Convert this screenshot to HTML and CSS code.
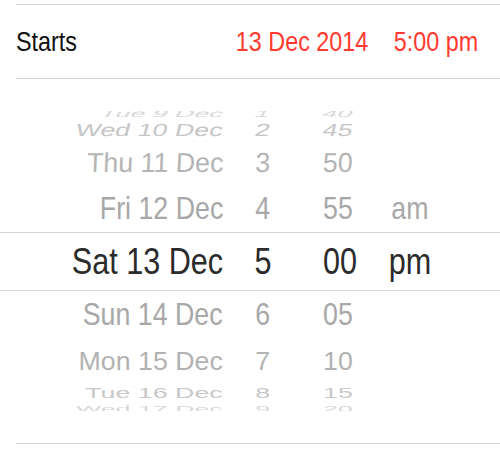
FILE: index.html
```html
<!DOCTYPE html>
<html>
<head>
<meta charset="utf-8">
<link rel="stylesheet" href="styles.css">
</head>
<body>
<div class="screen">
  <div class="rule"></div>
  <div class="field">
    <span class="sx label">Starts</span>
    <span class="sx value"><span>13 Dec 2014</span><span>5:00 pm</span></span>
  </div>
  <div class="rule"></div>
  <div class="picker">
    <div class="wheel">
      <div class="row r-up4"><div class="c-date"><span class="sx">Tue 9 Dec</span></div><div class="c-hour"><span class="sx">1</span></div><div class="c-min"><span class="sx">40</span></div><div class="c-ampm"></div></div>
      <div class="row r-up3"><div class="c-date"><span class="sx">Wed 10 Dec</span></div><div class="c-hour"><span class="sx">2</span></div><div class="c-min"><span class="sx">45</span></div><div class="c-ampm"></div></div>
      <div class="row r-up2"><div class="c-date"><span class="sx">Thu 11 Dec</span></div><div class="c-hour"><span class="sx">3</span></div><div class="c-min"><span class="sx">50</span></div><div class="c-ampm"></div></div>
      <div class="row r-up1"><div class="c-date"><span class="sx">Fri 12 Dec</span></div><div class="c-hour"><span class="sx">4</span></div><div class="c-min"><span class="sx">55</span></div><div class="c-ampm"><span class="sx">am</span></div></div>
      <div class="row r-sel"><div class="c-date"><span class="sx">Sat 13 Dec</span></div><div class="c-hour"><span class="sx">5</span></div><div class="c-min"><span class="sx">00</span></div><div class="c-ampm"><span class="sx">pm</span></div></div>
      <div class="row r-dn1"><div class="c-date"><span class="sx">Sun 14 Dec</span></div><div class="c-hour"><span class="sx">6</span></div><div class="c-min"><span class="sx">05</span></div><div class="c-ampm"></div></div>
      <div class="row r-dn2"><div class="c-date"><span class="sx">Mon 15 Dec</span></div><div class="c-hour"><span class="sx">7</span></div><div class="c-min"><span class="sx">10</span></div><div class="c-ampm"></div></div>
      <div class="row r-dn3"><div class="c-date"><span class="sx">Tue 16 Dec</span></div><div class="c-hour"><span class="sx">8</span></div><div class="c-min"><span class="sx">15</span></div><div class="c-ampm"></div></div>
      <div class="row r-dn4"><div class="c-date"><span class="sx">Wed 17 Dec</span></div><div class="c-hour"><span class="sx">9</span></div><div class="c-min"><span class="sx">20</span></div><div class="c-ampm"></div></div>
    </div>
  </div>
  <div class="rule"></div>
</div>
</body>
</html>
```

FILE: styles.css
```css
html, body {
  margin: 0;
  padding: 0;
  background: #ffffff;
}

.screen {
  width: 500px;
  height: 450px;
  overflow: hidden;
  padding-top: 4px;
  box-sizing: border-box;
  font-family: "Liberation Sans", Arial, Helvetica, sans-serif;
}

.rule {
  height: 1px;
  margin-left: 16px;
  background: #d2d2d6;
}

.sx {
  display: inline-block;
  transform: scaleX(0.85);
  line-height: 1;
  white-space: nowrap;
}

.field {
  height: 73px;
  display: flex;
  align-items: center;
  justify-content: space-between;
  padding: 0 22px 0 16px;
  font-size: 27.5px;
}

.label {
  color: #111111;
  transform-origin: left center;
}

.value {
  display: inline-flex;
  gap: 30px;
  color: #ff3b30;
  transform-origin: right center;
}

.picker {
  padding: 32px 0;
}

.wheel {
  height: 300px;
  overflow: hidden;
  font-size: 31.5px;
}

.row {
  display: flex;
  align-items: center;
  width: 500px;
}

.c-date {
  width: 223px;
  flex: none;
  text-align: right;
}
.c-date .sx { transform-origin: right center; }

.c-hour {
  width: 80px;
  flex: none;
  text-align: center;
}
.c-hour .sx { transform-origin: center center; }

.c-min {
  width: 72px;
  flex: none;
  box-sizing: border-box;
  padding-left: 20px;
}
.c-min .sx { transform-origin: left center; }

.c-ampm {
  width: 70px;
  flex: none;
  text-align: center;
}
.c-ampm .sx { transform-origin: center center; }

.r-up4 { height: 15px; margin-top: -5px; transform: scaleY(0.32) skewX(-12deg); color: #d8d8d8; }
.r-up3 { height: 19px; transform: scaleY(0.56) skewX(-8deg); color: #c6c6c6; }
.r-up2 { height: 44px; transform: scaleY(0.87) skewX(-2deg); color: #b4b4b4; }
.r-up1 { height: 48px; transform: scaleY(0.98); color: #a8a8a8; }

.r-sel {
  height: 57px;
  border-top: 1px solid #d6d6d6;
  border-bottom: 1px solid #d6d6d6;
  font-size: 36px;
  color: #2b2b2b;
}

.r-dn1 { height: 46px; transform: scaleY(0.98); color: #a8a8a8; }
.r-dn2 { height: 48px; transform: scaleY(0.82); color: #b2b2b2; }
.r-dn3 { height: 15px; transform: scaleY(0.49); color: #c8c8c8; }
.r-dn4 { height: 18px; transform: scaleY(0.3); color: #d8d8d8; }
```
